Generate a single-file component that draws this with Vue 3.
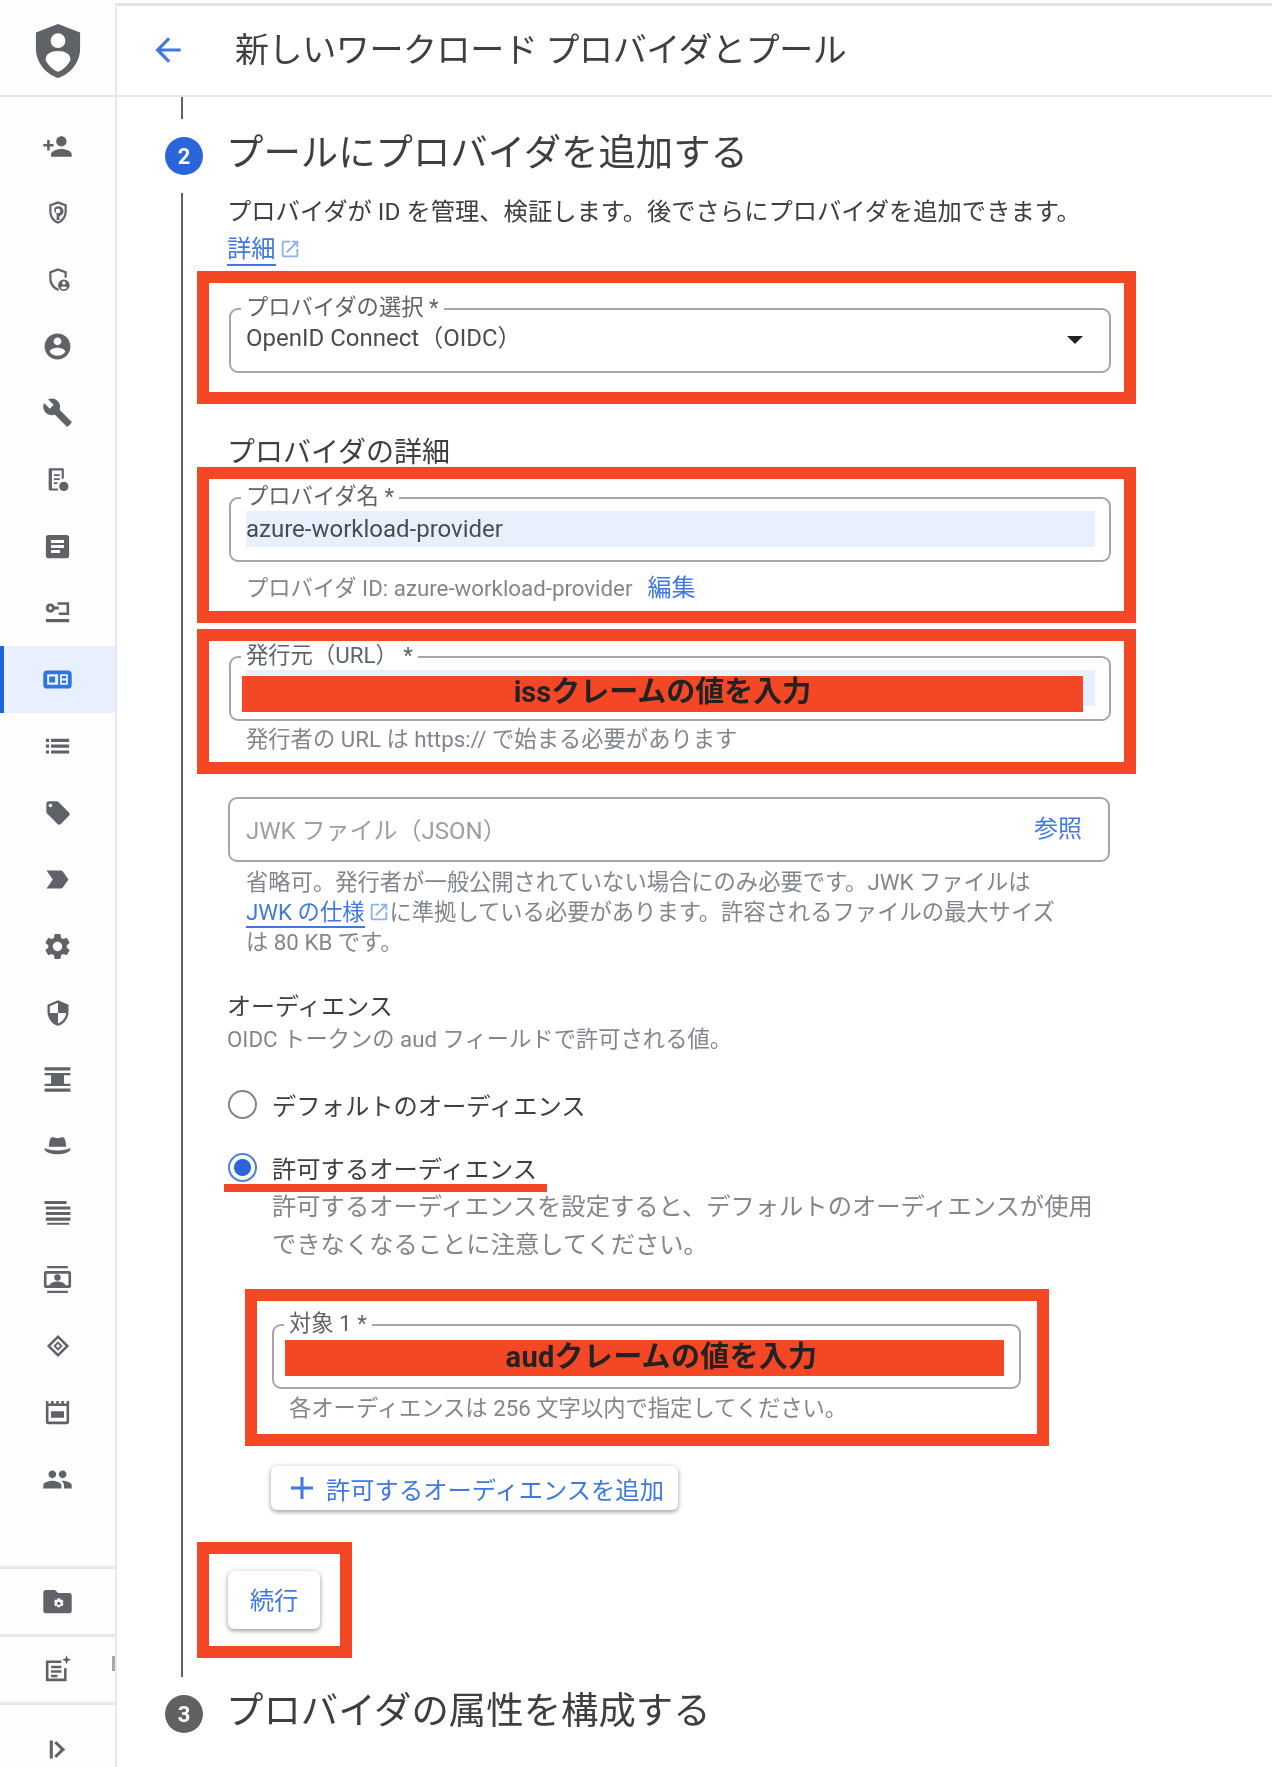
<script setup>
const circleHole = 'M12 8.2a2 2 0 1 0 0 4 2 2 0 0 0 0-4z'
const navIcons = [
  { d: 'M15 12c2.21 0 4-1.79 4-4s-1.79-4-4-4-4 1.79-4 4 1.79 4 4 4zm-9-2V7H4v3H1v2h3v3h2v-3h3v-2H6zm9 4c-2.67 0-8 1.34-8 4v2h16v-2c0-2.66-5.33-4-8-4z' },
  { d: 'M12 2 4.500 4.800v6c0 4.800 3.200 9.200 7.500 10.400 4.300-1.200 7.500-5.600 7.500-10.400v-6zm0 2 5.600 2.100v4.700c0 3.800-2.400 7.300-5.600 8.400-3.200-1.100-5.600-4.600-5.600-8.400V6.100zm0 2.300a3.200 3.200 0 0 0-1.200 6.200V18h2.400v-3.500A3.200 3.200 0 0 0 12 6.300z' + circleHole, small: true },
  { d: 'M12 2 4.500 4.800v6c0 4.800 3.200 9.200 7.500 10.400l1-.4-.7-1.500c-3.100-1.100-5.900-4.700-5.900-8.500V6.100L12 4l5.600 2.100V10h1.900V4.800zM17 11.500a5 5 0 1 0 0 10 5 5 0 0 0 0-10zm0 1.500a1.500 1.500 0 1 1 0 3 1.500 1.500 0 0 1 0-3zm0 7c-1.100 0-2.200-.5-2.800-1.300.5-.8 1.700-1.200 2.800-1.200s2.300.4 2.800 1.200c-.6.8-1.700 1.300-2.800 1.300z', small: true },
  { d: 'M12 2C6.480 2 2 6.480 2 12s4.480 10 10 10 10-4.480 10-10S17.520 2 12 2zm0 3c1.660 0 3 1.340 3 3s-1.340 3-3 3-3-1.340-3-3 1.340-3 3-3zm0 14.200c-2.500 0-4.710-1.280-6-3.220.03-1.990 4-3.080 6-3.080 1.990 0 5.970 1.090 6 3.080-1.290 1.940-3.500 3.220-6 3.220z' },
  { d: 'M22.700 19l-9.100-9.100c.9-2.300.4-5-1.500-6.900-2-2-5-2.400-7.400-1.300L9 6 6 9 1.600 4.700C.4 7.100.9 10.100 2.900 12.100c1.900 1.900 4.600 2.400 6.900 1.500l9.100 9.100c.4.4 1 .4 1.400 0l2.300-2.300c.5-.4.5-1.100.1-1.400z' },
  { d: 'M5 2h11a1 1 0 0 1 1 1v8h-1.800V3.800H6.800v15.400H12V21H5a1 1 0 0 1-1-1V3a1 1 0 0 1 1-1zm3.500 5h5v1.500h-5zm0 3.500h5V12h-5zm0 3.500h3v1.500h-3zM17 13.500a4 4 0 1 0 0 8 4 4 0 0 0 0-8z', small: true },
  { d: 'M5 3h14a2 2 0 0 1 2 2v14a2 2 0 0 1-2 2H5a2 2 0 0 1-2-2V5a2 2 0 0 1 2-2zm2 4v2.200h10V7zm0 3.900v2.200h10v-2.200zm0 3.900V17h7v-2.200z' },
  { d: 'M6.500 5a3.500 3.500 0 1 0 3.300 4.700H13V7.300H9.800A3.500 3.500 0 0 0 6.500 5zm0 2.200a1.300 1.300 0 1 1 0 2.600 1.300 1.300 0 0 1 0-2.600zM12 4h9v10h-8v-2h6V6h-7zM3 17h18v2.500H3z' },
  { d: 'M4 5h16a3 3 0 0 1 3 3v8a3 3 0 0 1-3 3H4a3 3 0 0 1-3-3V8a3 3 0 0 1 3-3zm0 3v8h8.500V8zm1.600 1.600h4.500v4.800H5.600zM14 8v8h6V8zm1.400 1.300h3.200v2h-3.200zm0 3.400h3.200v2h-3.200z', active: true },
  { d: 'M3 13h2.500v-2.500H3V13zm0 4.500h2.500V15H3v2.500zM3 8.500h2.500V6H3v2.500zM7 13h14v-2.500H7V13zm0 4.500h14V15H7v2.500zM7 6v2.500h14V6H7z' },
  { d: 'M21.410 11.580l-9-9C12.050 2.220 11.550 2 11 2H4c-1.100 0-2 .9-2 2v7c0 .55.22 1.050.59 1.420l9 9c.36.36.86.58 1.410.58.55 0 1.050-.22 1.410-.59l7-7c.37-.36.59-.86.59-1.410 0-.55-.23-1.060-.59-1.420zM5.500 7C4.670 7 4 6.330 4 5.500S4.670 4 5.500 4 7 4.670 7 5.500 6.330 7 5.500 7z', small: true },
  { d: 'M3.500 18.990l11 .01c.67 0 1.270-.33 1.630-.84L20.500 12l-4.370-6.160c-.36-.51-.96-.84-1.630-.84l-11 .01L8.340 12 3.500 18.990z' },
  { d: 'M19.140 12.940c.04-.3.06-.61.06-.94 0-.32-.02-.64-.07-.94l2.030-1.580c.18-.14.23-.41.12-.61l-1.920-3.320c-.12-.22-.37-.29-.59-.22l-2.390.96c-.5-.38-1.030-.7-1.620-.94l-.36-2.540c-.04-.24-.24-.41-.48-.41h-3.840c-.24 0-.43.17-.47.41l-.36 2.540c-.59.24-1.130.57-1.620.94l-2.390-.96c-.22-.08-.47 0-.59.22L2.740 8.870c-.12.21-.08.47.12.61l2.030 1.580c-.05.3-.09.63-.09.94s.02.64.07.94l-2.030 1.580c-.18.14-.23.41-.12.61l1.920 3.320c.12.22.37.29.59.22l2.390-.96c.5.38 1.030.7 1.620.94l.36 2.540c.05.24.24.41.48.41h3.840c.24 0 .44-.17.47-.41l.36-2.540c.59-.24 1.130-.56 1.620-.94l2.390.96c.22.08.47 0 .59-.22l1.920-3.320c.12-.22.07-.47-.12-.61l-2.010-1.580zM12 15.600c-1.980 0-3.600-1.620-3.600-3.600s1.620-3.600 3.600-3.600 3.600 1.620 3.600 3.600-1.620 3.600-3.600 3.600z' },
  { d: 'M12 1L3 5v6c0 5.550 3.840 10.740 9 12 5.160-1.260 9-6.450 9-12V5l-9-4zm0 10.990h7c-.53 4.120-3.280 7.790-7 8.940V12H5V6.300l7-3.110v8.800z', small: true },
  { d: 'M2 2.500h20V5H2zM2 19h20v2.500H2zM2 7h20v1.800h-5v6.400h5V17H2v-1.800h5V8.800H2z' },
  { d: 'M7 6c1.500-.8 3 .3 5 .3s3.500-1.100 5-.3c1 .8 1.500 3.500 1.700 7H5.300C5.500 9.500 6 6.800 7 6zM2 14c2 1.300 6 1.800 10 1.800S20 15.300 22 14v1.500C20 18 16 18.800 12 18.800S4 18 2 15.500z' },
  { d: 'M2 3h17v2.400H2zM3 7.300h19v2.400H3zM3 11.600h19V14H3zM3 15.900h19v2.400H3zM4 20h17v1.500H4z' },
  { d: 'M4 1.500h16v1.800H4zM4 20.700h16v1.800H4zM3 5.500h18a1.500 1.500 0 0 1 1.500 1.500v10a1.500 1.500 0 0 1-1.500 1.500H3A1.500 1.500 0 0 1 1.500 17V7A1.500 1.500 0 0 1 3 5.500zm.5 2v9h2.200c.7-2 3.800-3 6.300-3s5.600 1 6.300 3h2.200v-9zM12 8a2.500 2.500 0 1 1 0 5 2.500 2.500 0 0 1 0-5z' },
  { d: 'M12 2.500 21.500 12 12 21.500 2.500 12zM12 5.500 5.500 12 12 18.500 18.500 12zM12 8l4 4-4 4-4-4zM12 10.200 10.200 12 12 13.800 13.800 12z', small: true },
  { d: 'M3 3h2v2h2V3h2v2h2V3h2v2h2V3h2v2h2V3h2v16a2 2 0 0 1-2 2H5a2 2 0 0 1-2-2zm2 4v12h14V7zm2 4h10v5H7z' },
  { d: 'M16 11c1.660 0 2.990-1.340 2.990-3S17.660 5 16 5c-1.660 0-3 1.340-3 3s1.340 3 3 3zm-8 0c1.660 0 2.990-1.340 2.990-3S9.660 5 8 5C6.340 5 5 6.340 5 8s1.340 3 3 3zm0 2c-2.330 0-7 1.170-7 3.500V19h14v-2.500c0-2.330-4.670-3.500-7-3.500zm8 0c-.29 0-.62.02-.97.05 1.160.84 1.970 1.970 1.970 3.450V19h6v-2.500c0-2.330-4.670-3.500-7-3.500z' }
]
const footerIcons = [
  'M3 3h7l2.500 2.500H21a2 2 0 0 1 2 2V19a2 2 0 0 1-2 2H3a2 2 0 0 1-2-2V5a2 2 0 0 1 2-2zm9 6.500-.4 1.400-1.300-.5-1 1.700 1 .9-1 .9 1 1.700 1.300-.5.4 1.400h2l.4-1.400 1.300.5 1-1.700-1-.9 1-.9-1-1.700-1.300.5-.4-1.400zm1 2.700a1.300 1.300 0 1 1 0 2.600 1.300 1.300 0 0 1 0-2.600z',
  'M3 5h12v2H5v12h12v-8h2v10H3zM7 9h8v2H7zm0 3.500h8v2H7zm0 3.500h5v2H7zM19 1l1 2.500L22.500 4.500 20 5.500 19 8l-1-2.500L15.500 4.500 18 3.500z',
  'M6 5h2.400v14H6zM11 5.500l7 6.500-7 6.500-1.500-1.700L14.500 12 9.500 7.200z'
]
const extIcon = 'M19 19H5V5h7V3H5c-1.110 0-2 .9-2 2v14c0 1.100.89 2 2 2h14c1.100 0 2-.9 2-2v-7h-2v7zM14 3v2h3.590l-9.830 9.830 1.410 1.410L19 6.410V10h2V3h-7z'
</script>

<template>
  <div class="page">
    <aside class="sidebar">
      <div class="logo-row">
        <svg class="logo" viewBox="3 1 18 22">
          <path fill="#5f6368" d="M12 1 3 4.500V11c0 5.500 3.800 10.400 9 12 5.200-1.600 9-6.500 9-12V4.500z" />
          <circle cx="12" cy="7.800" r="3" fill="#fff" />
          <path fill="#fff" d="M12 12c-3 0-5 1.300-5 3.200v.6c1 2.200 3 3.900 5 4.700 2-.8 4-2.500 5-4.700v-.6c0-1.900-2-3.200-5-3.200z" />
        </svg>
      </div>
      <nav class="nav">
        <div v-for="(icon, i) in navIcons" :key="i" class="nav-item" :class="{ active: icon.active }">
          <svg class="nav-icon" :class="{ small: icon.small }" viewBox="0 0 24 24">
            <path fill-rule="evenodd" :d="icon.d" />
          </svg>
        </div>
      </nav>
      <div class="side-footer">
        <div v-for="(d, i) in footerIcons" :key="i" class="foot-item">
          <svg class="nav-icon" viewBox="0 0 24 24"><path fill-rule="evenodd" :d="d" /></svg>
        </div>
      </div>
      <span class="resize-handle"></span>
    </aside>

    <main class="main">
      <header class="topbar">
        <svg class="back" viewBox="0 0 24 24"><path d="M20 11H7.830l5.590-5.590L12 4l-8 8 8 8 1.410-1.410L7.830 13H20v-2z" /></svg>
        <h1>新しいワークロード プロバイダとプール</h1>
      </header>

      <div class="rail-stub"></div>
      <div class="step-head">
        <span class="num">2</span>
        <h2>プールにプロバイダを追加する</h2>
      </div>

      <section class="step-body">
        <p class="lead">
          プロバイダが ID を管理、検証します。後でさらにプロバイダを追加できます。<br />
          <a class="link">詳細</a>
          <svg class="ext" viewBox="0 0 24 24"><path :d="extIcon" /></svg>
        </p>

        <div class="mark box-select">
          <div class="field">
            <label>プロバイダの選択 *</label>
            <div class="value">OpenID Connect（OIDC）</div>
            <span class="caret"></span>
          </div>
        </div>

        <h3 class="details">プロバイダの詳細</h3>

        <div class="mark box-name">
          <div class="field">
            <label>プロバイダ名 *</label>
            <div class="fill">azure-workload-provider</div>
          </div>
          <div class="hint id-hint">プロバイダ ID: azure-workload-provider<a class="edit">編集</a></div>
        </div>

        <div class="mark box-issuer">
          <div class="field">
            <label>発行元（URL） *</label>
            <div class="fill"></div>
            <div class="redact iss">issクレームの値を入力</div>
          </div>
          <div class="hint">発行者の URL は https:// で始まる必要があります</div>
        </div>

        <div class="field jwk">
          <span class="placeholder">JWK ファイル（JSON）</span>
          <a class="browse">参照</a>
        </div>
        <p class="jwk-help">
          省略可。発行者が一般公開されていない場合にのみ必要です。JWK ファイルは<br />
          <a class="link">JWK の仕様</a><svg class="ext" viewBox="0 0 24 24"><path :d="extIcon" /></svg>に準拠している必要があります。許容されるファイルの最大サイズ<br />
          は 80 KB です。
        </p>

        <h3 class="aud-title">オーディエンス</h3>
        <p class="aud-sub">OIDC トークンの aud フィールドで許可される値。</p>

        <div class="radio first"><span class="dot"></span>デフォルトのオーディエンス</div>
        <div class="radio second">
          <span class="dot on"></span>許可するオーディエンス
          <span class="red-line"></span>
        </div>
        <p class="radio-desc">許可するオーディエンスを設定すると、デフォルトのオーディエンスが使用<br />できなくなることに注意してください。</p>

        <div class="mark box-aud">
          <div class="field">
            <label>対象 1 *</label>
            <div class="redact aud">audクレームの値を入力</div>
          </div>
          <div class="hint">各オーディエンスは 256 文字以内で指定してください。</div>
        </div>

        <button class="btn add">
          <svg class="plus" viewBox="0 0 22 22"><path d="M9.500 0h3v9.500H22v3h-9.500V22h-3v-9.500H0v-3h9.500z" /></svg>
          許可するオーディエンスを追加
        </button>

        <div class="mark box-next">
          <button class="btn next">続行</button>
        </div>
      </section>

      <div class="step-head last">
        <span class="num grey">3</span>
        <h2>プロバイダの属性を構成する</h2>
      </div>
    </main>
  </div>
</template>

<style>
body { background: #fff; }
</style>

<style scoped>
.page {
  position: relative;
  display: flex;
  width: 1272px;
  height: 1767px;
  box-sizing: border-box;
  border-top: 3px solid #fff;
  overflow: hidden;
  background: #fff;
  color: #3c4043;
  font-family: Roboto, "Noto Sans CJK JP", sans-serif;
  filter: blur(0.45px);
}
.page::before {
  content: "";
  position: absolute;
  left: 0;
  right: 0;
  top: 0;
  height: 3px;
  background: #e3e3e3;
}
.sidebar {
  position: relative;
  display: flex;
  flex-direction: column;
  flex: none;
  width: 117px;
  box-sizing: border-box;
  border-right: 2px solid #e6e8eb;
  background: #fdfdfd;
}
.logo-row {
  display: flex;
  align-items: center;
  justify-content: center;
  height: 94px;
  padding-top: 4px;
  box-sizing: border-box;
  border-bottom: 2px solid #e6e6e6;
}
.logo { width: 46px; height: 54px; }
.nav { margin-top: 16px; }
.nav-item {
  display: flex;
  align-items: center;
  justify-content: center;
  height: 66.65px;
  fill: #5f6368;
}
.nav-item.active {
  background: #e8f0fe;
  box-shadow: inset 4px 0 0 #1a66d9;
  fill: #2f74e0;
}
.nav-icon { width: 31px; height: 31px; }
.nav-icon.small { width: 28px; height: 28px; }
.side-footer { margin-top: auto; }
.foot-item {
  display: flex;
  align-items: center;
  justify-content: center;
  height: 68px;
  border-top: 3px solid #e8e8e8;
  box-sizing: border-box;
  fill: #5f6368;
}
.foot-item:last-child { height: 65px; padding-top: 26px; }
.resize-handle {
  position: absolute;
  right: 0;
  top: 1653px;
  width: 3px;
  height: 15px;
  background: #a8a8a8;
}
.main { flex: 1; min-width: 0; }
.topbar {
  display: flex;
  align-items: center;
  height: 94px;
  box-sizing: border-box;
  border-bottom: 2px solid #e6e6e6;
  padding: 2px 0 0 32px;
}
.back { width: 38px; height: 38px; fill: #3f78e0; flex: none; }
.topbar h1 {
  margin: 0 0 0 48px;
  font-size: 34px;
  font-weight: 400;
  line-height: 40px;
  color: #3c4043;
  letter-spacing: -0.4px;
}
.rail-stub { width: 2px; height: 22px; margin: 0 0 18px 64px; background: #5f6368; }
.step-head {
  display: flex;
  align-items: center;
  height: 38px;
  padding-left: 48px;
}
.step-head.last { margin-top: 18px; }
.num {
  display: flex;
  align-items: center;
  justify-content: center;
  flex: none;
  width: 38px;
  height: 38px;
  border-radius: 50%;
  background: #2a66d9;
  color: #fff;
  font-size: 22px;
  font-weight: 700;
}
.num.grey { background: #616161; }
.step-head h2 {
  margin: -6px 0 0 23px;
  font-size: 37.4px;
  font-weight: 400;
  line-height: 44px;
  color: #3c4043;
  white-space: nowrap;
}
.step-body {
  margin: 18px 0 0 64px;
  padding: 0 0 19px 44px;
  border-left: 2px solid #5f6368;
}
.lead {
  margin: 0 0 4px;
  height: 74px;
  font-size: 24.3px;
  line-height: 37px;
  color: #3c4043;
}
.link {
  color: #3f78e0;
  border-bottom: 2px solid #3f78e0;
  padding-bottom: 1px;
}
.ext { width: 22px; height: 22px; margin-left: 3px; vertical-align: -3px; fill: #8fb0ee; }
.mark {
  box-sizing: border-box;
  margin-left: -30px;
  width: 939px;
  border: 12px solid #f44725;
  padding-left: 20px;
  padding-right: 13px;
}
.field {
  position: relative;
  box-sizing: border-box;
  border: 2px solid #a4a6a8;
  border-radius: 9px;
  height: 65px;
}
.field label {
  position: absolute;
  left: 10px;
  top: -17px;
  padding: 0 5px;
  background: #fff;
  font-size: 22.3px;
  line-height: 28px;
  color: #5f6368;
  white-space: nowrap;
}
.value {
  padding: 11px 15px 0;
  font-size: 24px;
  line-height: 34px;
  color: #4a4d50;
}
.caret {
  position: absolute;
  right: 26px;
  top: 26px;
  border-left: 8px solid transparent;
  border-right: 8px solid transparent;
  border-top: 8px solid #202124;
}
.box-select { height: 133px; padding-top: 25px; }
.details {
  margin: 31px 0 -4px;
  font-size: 28px;
  font-weight: 400;
  line-height: 36px;
  color: #3c4043;
}
.box-name { height: 156px; padding-top: 18px; }
.box-issuer { height: 145px; margin-top: 6px; padding-top: 15px; }
.fill {
  margin: 12px 14px 0 15px;
  height: 36px;
  background: #e8f0fe;
  font-size: 24px;
  line-height: 36px;
  color: #4a4d50;
  white-space: nowrap;
}
.hint {
  margin: 2px 0 0 17px;
  font-size: 22.3px;
  line-height: 32px;
  color: #80868b;
  white-space: nowrap;
}
.id-hint { margin-top: 10px; }
.edit { margin-left: 15px; font-size: 24px; color: #3f78e0; }
.redact {
  position: absolute;
  background: #f44725;
  color: #222;
  font-size: 29px;
  font-weight: 700;
  height: 36px;
  line-height: 33px;
  text-align: center;
  white-space: nowrap;
}
.redact.iss { left: 11px; right: 26px; top: 18px; }
.redact.aud { left: 11px; right: 15px; top: 14px; padding-left: 34px; box-sizing: border-box; line-height: 34px; letter-spacing: .3px; }
.jwk {
  display: flex;
  align-items: center;
  justify-content: space-between;
  width: 882px;
  margin: 23px 0 0 1px;
  padding: 0 26px 0 16px;
}
.placeholder { font-size: 24px; line-height: 34px; color: #9aa0a6; margin-top: 3px; }
.browse { font-size: 24px; color: #3f78e0; margin-top: -6px; }
.jwk-help {
  margin: 5px 0 0 19px;
  font-size: 22.3px;
  line-height: 30px;
  color: #80868b;
  white-space: nowrap;
}
.aud-title {
  margin: 32px 0 0;
  font-size: 24px;
  font-weight: 400;
  line-height: 36px;
  color: #3c4043;
}
.aud-sub {
  margin: 0;
  font-size: 22.3px;
  line-height: 28px;
  color: #80868b;
}
.radio {
  position: relative;
  display: flex;
  align-items: center;
  height: 36px;
  font-size: 24.3px;
  color: #3c4043;
  white-space: nowrap;
}
.radio.first { margin-top: 33px; }
.radio.second { margin-top: 27px; }
.dot {
  box-sizing: border-box;
  flex: none;
  width: 29px;
  height: 29px;
  margin: 0 15px 0 1px;
  border: 2px solid #80868b;
  border-radius: 50%;
  background: #fff;
}
.dot.on {
  border-color: #4a80e4;
  background: radial-gradient(circle, #2a66d9 0 8px, #fff 9px);
}
.red-line {
  position: absolute;
  left: -3px;
  top: 35px;
  width: 323px;
  height: 8px;
  background: #f44725;
}
.radio-desc {
  margin: 3px 0 0 45px;
  font-size: 24.3px;
  line-height: 37.5px;
  color: #80868b;
  white-space: nowrap;
}
.box-aud {
  width: 804px;
  height: 157px;
  margin: 26px 0 0 18px;
  padding: 23px 16px 0 15px;
}
.box-aud .hint { margin-top: 3px; }
.btn {
  display: block;
  box-sizing: border-box;
  border: 0;
  border-radius: 6px;
  background: #fff;
  box-shadow: 0 2px 4px rgba(60, 64, 67, .45), 0 0 6px rgba(60, 64, 67, .12);
  font-family: inherit;
  font-size: 24.3px;
  color: #3f78e0;
  white-space: nowrap;
}
.add {
  display: flex;
  align-items: center;
  width: 407px;
  height: 44px;
  margin: 20px 0 0 44px;
  padding: 0 0 0 20px;
}
.plus { width: 22px; height: 22px; margin-right: 13px; fill: #3f78e0; }
.box-next {
  width: 155px;
  height: 116px;
  margin-top: 32px;
  padding: 17px 0 0 19px;
}
.next { width: 92px; height: 58px; padding: 0 0 3px; }
</style>
